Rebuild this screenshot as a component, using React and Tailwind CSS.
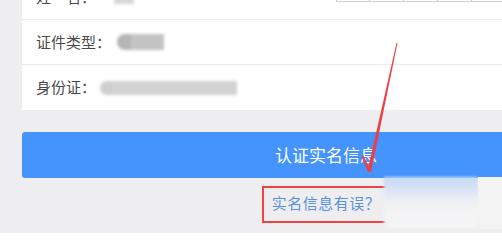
import React from "react";

const Row = ({ label, children, last }) => (
  <div
    className={
      "h-[45px] flex items-center pl-[14px] " +
      (last ? "" : "border-b border-[#ebebeb]")
    }
  >
    <span className="text-[15px] text-[#4a4a4a]">{label}</span>
    {children}
  </div>
);

const Arrow = () => (
  <svg
    className="absolute left-0 top-0 pointer-events-none"
    width="502"
    height="233"
    viewBox="0 0 502 233"
  >
    <polygon points="396.5,43 397.5,43 371,172 367.5,171" fill="#ef3e42" />
    <polygon points="361.5,156 363.5,155.5 370.5,171 368,172" fill="#ef3e42" />
  </svg>
);

export default function App() {
  return (
    <div
      className="relative w-[502px] h-[233px] overflow-hidden bg-[#eeeef1]"
      style={{ fontFamily: '"Noto Sans CJK SC", "Noto Sans", sans-serif' }}
    >
      <div className="w-[652px] px-[22px]">
        <div className="-mt-[25px] bg-white">
          <Row label="姓　名：">
            <div className="ml-[18px] w-[20px] h-[14px] bg-[#d8d8d8] blur-[1.5px]" />
          </Row>
          <Row label="证件类型：">
            <div className="ml-[6px] flex items-center blur-[1.5px]">
              <div className="w-[14px] h-[16px] bg-[#b5b5b5] rounded-l-full" />
              <div className="w-[33px] h-[16px] bg-[#c4c4c4]" />
            </div>
          </Row>
          <Row label="身份证：" last>
            <div className="ml-[4px] flex items-center blur-[1.5px]">
              <div className="w-[12px] h-[14px] bg-[#cfcfcf] rounded-l-full" />
              <div className="w-[125px] h-[14px] bg-[#d2d2d2]" />
            </div>
          </Row>
        </div>

        <button className="mt-[22px] w-full h-[46px] rounded-[3px] bg-[#4593fd] text-white text-[17px] flex items-center justify-center">
          认证实名信息
        </button>

        <div className="mt-[14px] flex justify-center">
          <span className="text-[15px] text-[#5b90e0] tracking-[0.5px]">
            实名信息有误？
          </span>
        </div>
      </div>

      {/* table lines at the top right */}
      <div className="absolute left-[336px] top-[-2px] w-[170px] h-[4px] grid grid-cols-5 border-b border-[#cfcfcf]">
        <div className="border-x border-[#cfcfcf]" />
        <div className="border-r border-[#cfcfcf]" />
        <div className="border-r border-[#cfcfcf]" />
        <div className="border-r border-[#cfcfcf]" />
        <div className="border-r border-[#cfcfcf]" />
      </div>

      {/* red highlight box */}
      <div className="absolute left-[262px] top-[186px] w-[130px] h-[37px] border-2 border-[#ef4444]" />

      {/* blurred patch */}
      <div className="absolute left-[384px] top-[177px] w-[94px] h-[51px] bg-linear-to-b from-[#c2d7f6] via-[#f1f1f3] to-[#f5f5f6] blur-[1.5px]" />
      <div className="absolute left-[478px] top-[177px] w-[24px] h-[52px] bg-[#f3f3f4]" />

      <Arrow />
    </div>
  );
}
